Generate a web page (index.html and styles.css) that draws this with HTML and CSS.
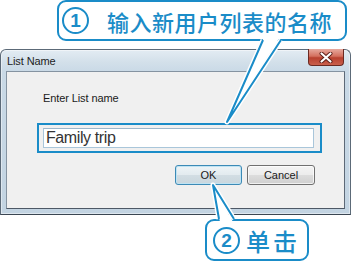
FILE: index.html
```html
<!DOCTYPE html>
<html lang="zh-CN">
<head>
<meta charset="utf-8">
<title>List Name</title>
<link rel="stylesheet" href="styles.css">
</head>
<body>
<div class="page">
  <div class="window">
    <div class="titlebar">
      <span class="title">List Name</span>
      <span class="close">
        <svg width="16" height="11" viewBox="0 0 16 11">
          <path d="M3.5 1.5 L12.5 9.5 M12.5 1.5 L3.5 9.5" stroke="#5a1d16" stroke-width="4" stroke-linecap="round"/>
          <path d="M3.5 1.5 L12.5 9.5 M12.5 1.5 L3.5 9.5" stroke="#ffffff" stroke-width="2.2" stroke-linecap="round"/>
        </svg>
      </span>
    </div>
    <div class="client">
      <div class="label">Enter List name</div>
      <div class="highlight">
        <div class="edit">Family trip</div>
      </div>
      <div class="buttons">
        <span class="btn btn-ok">OK</span>
        <span class="btn">Cancel</span>
      </div>
    </div>
  </div>

  <div class="callout c1">
    <span class="num">1</span>
    <span class="ctext">输入新用户列表的名称</span>
  </div>
  <div class="callout c2">
    <span class="num">2</span>
    <span class="ctext">单击</span>
  </div>

  <svg class="tails" width="351" height="263" viewBox="0 0 351 263">
    <polyline points="263,40 227,122 281,40" fill="none" stroke="#ffffff" stroke-width="5" stroke-linejoin="round"/>
    <polygon points="264,37 280,37 227,120" fill="#ffffff"/>
    <polyline points="263,40 227,122 281,40" fill="none" stroke="#1a8cc8" stroke-width="2" stroke-linejoin="round"/>
    <polyline points="219,219 213,185 234,219" fill="none" stroke="#ffffff" stroke-width="5" stroke-linejoin="round"/>
    <polygon points="220,222 233,222 213,187" fill="#ffffff"/>
    <polyline points="219,219 213,185 234,219" fill="none" stroke="#1a8cc8" stroke-width="2" stroke-linejoin="round"/>
  </svg>
</div>
</body>
</html>
```
FILE: styles.css
```css
html, body {
  margin: 0;
  padding: 0;
  background: #ffffff;
}

.page {
  position: relative;
  width: 351px;
  height: 263px;
  overflow: hidden;
  background: #ffffff;
  padding-top: 49px;
  box-sizing: border-box;
  font-family: "Liberation Sans", Arial, sans-serif;
}

.window {
  width: 351px;
  height: 166px;
  box-sizing: border-box;
  border: 1px solid #5c6a78;
  border-bottom-color: #3b4652;
  border-radius: 6px 6px 0 0;
  padding: 0 5px 5px 5px;
  background: linear-gradient(180deg, #e3ecf3 0px, #d3e0ea 12px, #c9d9e6 22px, #c3d4e2 100%);
  box-shadow: inset 0 0 0 1px rgba(255, 255, 255, 0.45);
  display: flex;
  flex-direction: column;
}

.titlebar {
  height: 21px;
  display: flex;
  align-items: flex-start;
  justify-content: space-between;
  padding-left: 1px;
}

.title {
  font-size: 11px;
  color: #1c1c1c;
  margin-top: 5px;
  letter-spacing: -0.1px;
}

.close {
  width: 36px;
  height: 17px;
  margin-top: -1px;
  margin-right: 1px;
  box-sizing: border-box;
  border: 1px solid #6b2a22;
  border-top: none;
  border-radius: 0 0 4px 4px;
  background: linear-gradient(180deg, #e7a99e 0%, #d4705f 45%, #b8402f 55%, #c9604c 100%);
  display: flex;
  align-items: center;
  justify-content: center;
}

.client {
  flex: 1;
  background: #f0f0f0;
  border: 1px solid #8593a1;
  border-right-color: #5d6977;
  border-bottom-color: #4d5866;
  display: flex;
  flex-direction: column;
}

.label {
  font-size: 11px;
  line-height: 13px;
  color: #1a1a1a;
  margin: 20px 0 0 36px;
  letter-spacing: -0.1px;
}

.highlight {
  margin: 18px 0 0 30px;
  width: 285px;
  height: 30px;
  box-sizing: border-box;
  border: 2px solid #1a8cc8;
  padding: 3px 6px 3px 4px;
  background: #f0f0f0;
}

.edit {
  width: 271px;
  height: 20px;
  box-sizing: border-box;
  background: #ffffff;
  border: 1px solid #a9c6da;
  border-top-color: #9db7cb;
  font-size: 16px;
  line-height: 18px;
  color: #333333;
  padding-left: 2px;
  letter-spacing: -0.4px;
}

.buttons {
  display: flex;
  justify-content: flex-end;
  gap: 5px;
  margin: 12px 29px 0 0;
}

.btn {
  width: 68px;
  height: 20px;
  box-sizing: border-box;
  border: 1px solid #707070;
  border-radius: 3px;
  background: linear-gradient(180deg, #f4f4f4 0%, #ececec 48%, #dcdcdc 52%, #d0d0d0 100%);
  box-shadow: inset 0 0 0 1px rgba(255, 255, 255, 0.7);
  font-size: 11px;
  color: #1a1a1a;
  display: flex;
  align-items: center;
  justify-content: center;
}

.btn-ok {
  width: 67px;
  border-color: #3c8ab6;
  background: linear-gradient(180deg, #eef4f7 0%, #e3ebef 48%, #d2dde3 52%, #c9d6dd 100%);
  box-shadow: inset 0 0 0 1px #bfe3f3;
}

.callout {
  position: absolute;
  z-index: 1;
  box-sizing: border-box;
  border: 2px solid #1a8cc8;
  border-radius: 9px;
  background: #ffffff;
  box-shadow: 0 0 0 2px #ffffff;
  display: flex;
  align-items: center;
  color: #1a8cc8;
}

.c1 {
  left: 57px;
  top: 0;
  width: 290px;
  height: 41px;
  padding-left: 3px;
  gap: 18px;
}

.c2 {
  left: 205px;
  top: 219px;
  width: 104px;
  height: 42px;
  padding-left: 6px;
  gap: 6px;
}

.num {
  width: 27px;
  height: 27px;
  box-sizing: border-box;
  border: 2.5px solid #1a8cc8;
  border-radius: 50%;
  display: flex;
  align-items: center;
  justify-content: center;
  font-family: "Liberation Sans", Arial, sans-serif;
  font-weight: bold;
  font-size: 19px;
  line-height: 1;
  color: #1a8cc8;
}

.ctext {
  font-family: "Noto Sans CJK SC", "Noto Sans", sans-serif;
  font-weight: 500;
  white-space: nowrap;
}

.c1 .ctext {
  font-size: 22px;
  letter-spacing: 0.5px;
}

.c2 .ctext {
  font-size: 24px;
  letter-spacing: 3px;
}

.tails {
  position: absolute;
  left: 0;
  top: 0;
  z-index: 2;
  pointer-events: none;
}
```
